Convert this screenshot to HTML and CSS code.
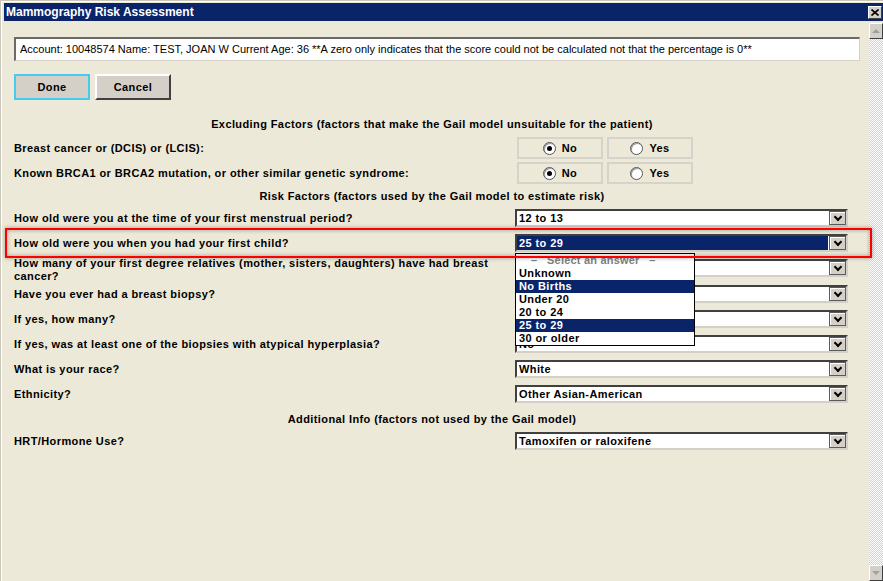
FILE: index.html
```html
<!DOCTYPE html>
<html>
<head>
<meta charset="utf-8">
<title>Mammography Risk Assessment</title>
<link rel="stylesheet" href="styles.css">
</head>
<body>
<div class="window">
  <div class="titlebar">
    <span class="title">Mammography Risk Assessment</span>
    <span class="close"><svg width="8" height="7" viewBox="0 0 8 7"><path d="M0.5 0.5 L7.5 6.5 M7.5 0.5 L0.5 6.5" stroke="#000" stroke-width="1.6" fill="none"/></svg></span>
  </div>
  <div class="client">
    <div class="content">
      <div class="account">Account: 10048574 Name: TEST, JOAN W Current Age: 36 **A zero only indicates that the score could not be calculated not that the percentage is 0**</div>
      <div class="buttons">
        <button class="btn focused">Done</button>
        <button class="btn">Cancel</button>
      </div>
      <div class="form">
        <div class="heading">Excluding Factors (factors that make the Gail model unsuitable for the patient)</div>
        <div class="row radio-row">
          <div class="label">Breast cancer or (DCIS) or (LCIS):</div>
          <div class="radios">
            <span class="radio-box"><span class="radio checked"></span>No</span>
            <span class="radio-box"><span class="radio"></span>Yes</span>
          </div>
        </div>
        <div class="row radio-row">
          <div class="label">Known BRCA1 or BRCA2 mutation, or other similar genetic syndrome:</div>
          <div class="radios">
            <span class="radio-box"><span class="radio checked"></span>No</span>
            <span class="radio-box"><span class="radio"></span>Yes</span>
          </div>
        </div>
        <div class="heading">Risk Factors (factors used by the Gail model to estimate risk)</div>
        <div class="row">
          <div class="label">How old were you at the time of your first menstrual period?</div>
          <div class="select"><span class="value">12 to 13</span><span class="arrow"></span></div>
        </div>
        <div class="row">
          <div class="label">How old were you when you had your first child?</div>
          <div class="select"><span class="value selected">25 to 29</span><span class="arrow"></span></div>
        </div>
        <div class="row tall">
          <div class="label">How many of your first degree relatives (mother, sisters, daughters) have had breast<br>cancer?</div>
          <div class="select"><span class="value"></span><span class="arrow"></span></div>
        </div>
        <div class="row">
          <div class="label">Have you ever had a breast biopsy?</div>
          <div class="select"><span class="value"></span><span class="arrow"></span></div>
        </div>
        <div class="row">
          <div class="label">If yes, how many?</div>
          <div class="select"><span class="value"></span><span class="arrow"></span></div>
        </div>
        <div class="row">
          <div class="label">If yes, was at least one of the biopsies with atypical hyperplasia?</div>
          <div class="select"><span class="value">No</span><span class="arrow"></span></div>
        </div>
        <div class="row">
          <div class="label">What is your race?</div>
          <div class="select"><span class="value">White</span><span class="arrow"></span></div>
        </div>
        <div class="row">
          <div class="label">Ethnicity?</div>
          <div class="select"><span class="value">Other Asian-American</span><span class="arrow"></span></div>
        </div>
        <div class="heading">Additional Info (factors not used by the Gail model)</div>
        <div class="row">
          <div class="label">HRT/Hormone Use?</div>
          <div class="select"><span class="value">Tamoxifen or raloxifene</span><span class="arrow"></span></div>
        </div>
      </div>
    </div>
    <div class="scrollbar">
      <div class="sb-btn up"></div>
      <div class="sb-track"></div>
      <div class="sb-btn down"></div>
    </div>
  </div>
  <div class="highlight"></div>
  <div class="listbox">
    <div class="opt placeholder">–   Select an answer   –</div>
    <div class="opt">Unknown</div>
    <div class="opt sel">No Births</div>
    <div class="opt">Under 20</div>
    <div class="opt">20 to 24</div>
    <div class="opt sel">25 to 29</div>
    <div class="opt">30 or older</div>
  </div>
</div>
</body>
</html>
```
FILE: styles.css
```css
* { box-sizing: border-box; }
html, body { margin: 0; padding: 0; }
body {
  width: 883px;
  height: 581px;
  overflow: hidden;
  background: #ece9d8;
  font-family: "Liberation Sans", Arial, sans-serif;
  font-size: 11px;
  color: #000;
}
.window {
  position: relative;
  width: 883px;
  height: 581px;
  display: flex;
  flex-direction: column;
  padding: 3px 0 0 4px;
  background: #ece9d8;
  box-shadow: inset 1px 1px #c9c6bb, inset 2px 2px #fff;
}
.titlebar {
  height: 18px;
  flex: none;
  background: #0a246a;
  display: flex;
  align-items: center;
  justify-content: space-between;
  padding: 0 1px 0 2px;
}
.title {
  color: #fff;
  font-weight: bold;
  font-size: 12px;
}
.close {
  width: 14px;
  height: 13px;
  background: #d4d0c8;
  border: 1px solid;
  border-color: #fff #404040 #404040 #fff;
  display: flex;
  align-items: center;
  justify-content: center;
}
.client {
  flex: 1;
  display: flex;
  min-height: 0;
  margin-top: 1px;
}
.content {
  flex: 1;
  padding: 15px 9px 0 10px;
}
.account {
  height: 24px;
  background: #fff;
  border-style: solid;
  border-width: 2px 1px 1px 2px;
  border-color: #6a6a6a #d4d0c8 #d4d0c8 #6a6a6a;
  padding-left: 4px;
  line-height: 20px;
  white-space: nowrap;
  overflow: hidden;
}
.buttons {
  display: flex;
  gap: 5px;
  margin-top: 13px;
}
.btn {
  width: 76px;
  height: 26px;
  padding: 0;
  font-family: "Liberation Sans", Arial, sans-serif;
  font-size: 11px;
  font-weight: bold;
  letter-spacing: 0.4px;
  color: #000;
  background: #d4d0c8;
  border: 2px solid;
  border-color: #fff #404040 #404040 #fff;
}
.btn.focused {
  border: 2px solid #44ccf0;
}
.form {
  margin-top: 13px;
}
.heading {
  height: 22px;
  line-height: 22px;
  text-align: center;
  font-weight: bold;
  letter-spacing: 0.4px;
  padding-right: 10px;
}
.row {
  display: grid;
  grid-template-columns: 501px 333px;
  align-items: center;
  height: 25px;
  padding-bottom: 3px;
}
.row.radio-row {
  padding: 2px 0 1px;
}
.row.tall {
  height: 26px;
  padding: 0;
  align-items: start;
}
.row.tall .select { margin-top: 2px; }
.label {
  font-weight: bold;
  letter-spacing: 0.4px;
  line-height: 13px;
}
.radios {
  display: flex;
  gap: 4px;
  margin-left: 2px;
}
.radio-box {
  width: 86px;
  height: 22px;
  border: 2px solid #d6d3cb;
  display: flex;
  align-items: center;
  justify-content: center;
  gap: 6px;
  font-weight: bold;
  letter-spacing: 0.4px;
}
.radio {
  position: relative;
  width: 13px;
  height: 13px;
  border-radius: 50%;
  background: #fff;
  border: 1px solid #555;
  box-shadow: inset 1px 1px #9a9a9a;
}
.radio.checked::after {
  content: "";
  position: absolute;
  left: 3px;
  top: 3px;
  width: 5px;
  height: 5px;
  border-radius: 50%;
  background: #000;
}
.select {
  display: flex;
  height: 18px;
  border-style: solid;
  border-width: 2px;
  border-color: #404040 #d4d0c8 #d4d0c8 #404040;
  background: #fff;
}
.value {
  flex: 1;
  font-weight: bold;
  letter-spacing: 0.4px;
  line-height: 14px;
  padding-left: 2px;
  white-space: nowrap;
  overflow: hidden;
}
.value.selected {
  background: #0a246a;
  color: #fff;
  margin-right: 1px;
}
.arrow {
  width: 17px;
  background: #d4d0c8;
  border: 1px solid #5a5a5a;
  box-shadow: inset 1px 1px #fff;
  display: flex;
  align-items: center;
  justify-content: center;
}
.arrow::after {
  content: "";
  width: 4px;
  height: 4px;
  border-right: 2px solid #000;
  border-bottom: 2px solid #000;
  transform: rotate(45deg);
  margin-top: -3px;
}
.scrollbar {
  width: 14px;
  flex: none;
  display: flex;
  flex-direction: column;
  margin-top: 1px;
  background: repeating-conic-gradient(#d4d0c8 0 25%, #fff 0 50%) 0 0 / 2px 2px;
}
.sb-btn {
  height: 16px;
  background: #d4d0c8;
  border: 1px solid;
  border-color: #fff #404040 #404040 #fff;
  display: flex;
  align-items: center;
  justify-content: center;
}
.sb-track { flex: 1; }
.sb-btn.up::after {
  content: "";
  border-left: 4px solid transparent;
  border-right: 4px solid transparent;
  border-bottom: 4px solid #a0a0a0;
}
.sb-btn.down::after {
  content: "";
  border-left: 4px solid transparent;
  border-right: 4px solid transparent;
  border-top: 4px solid #a0a0a0;
}
.highlight {
  position: absolute;
  left: 5px;
  top: 228px;
  width: 867px;
  height: 30px;
  border: 2px solid #f00;
  box-shadow: 0 0 4px rgba(0, 0, 0, 0.35), inset 0 0 4px rgba(0, 0, 0, 0.35);
  z-index: 3;
}
.listbox {
  position: absolute;
  left: 515px;
  top: 253px;
  width: 180px;
  height: 93px;
  border: 1px solid #000;
  background: #fff;
  z-index: 2;
  font-weight: bold;
  letter-spacing: 0.4px;
}
.opt {
  height: 13px;
  line-height: 13px;
  padding-left: 3px;
  white-space: pre;
}
.opt.sel {
  background: #0a246a;
  color: #fff;
}
.opt.placeholder {
  color: #808080;
  padding-left: 15px;
  letter-spacing: 0.2px;
}
```
